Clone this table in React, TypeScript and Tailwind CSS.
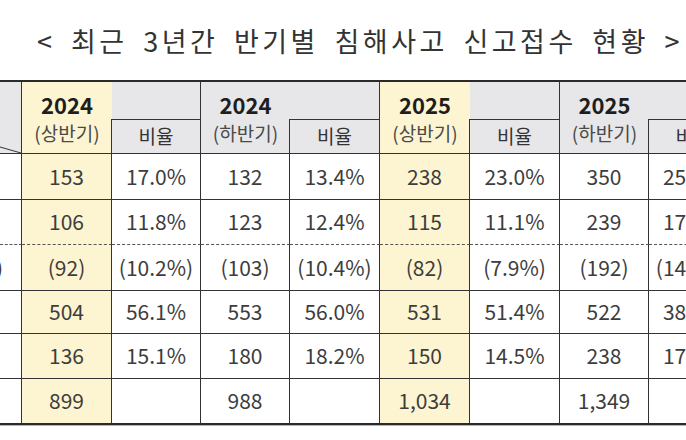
const groups = [
  { year: "2024", half: "(상반기)", yellow: true },
  { year: "2024", half: "(하반기)", yellow: false },
  { year: "2025", half: "(상반기)", yellow: true },
  { year: "2025", half: "(하반기)", yellow: false },
];

// one row per incident type; label column is cropped in the screenshot
const rows: { label: string; values: string[]; dashed?: boolean }[] = [
  { label: "DDoS 공격", values: ["153", "17.0%", "132", "13.4%", "238", "23.0%", "350", "25.9%"] },
  { label: "악성코드 감염", values: ["106", "11.8%", "123", "12.4%", "115", "11.1%", "239", "17.7%"], dashed: true },
  { label: "(랜섬웨어)", values: ["(92)", "(10.2%)", "(103)", "(10.4%)", "(82)", "(7.9%)", "(192)", "(14.2%)"] },
  { label: "서버 해킹", values: ["504", "56.1%", "553", "56.0%", "531", "51.4%", "522", "38.7%"] },
  { label: "기타", values: ["136", "15.1%", "180", "18.2%", "150", "14.5%", "238", "17.6%"] },
  { label: "합계", values: ["899", "", "988", "", "1,034", "", "1,349", ""] },
];

const App = () => {
  return (
    <div className="w-[686px] h-[440px] overflow-hidden bg-white font-['Noto_Sans_CJK_KR',sans-serif]">
      <div className="h-[80px] flex items-center justify-center pl-[34px]">
        <h1 className="text-[27px] leading-none tracking-[3.5px] [word-spacing:6px] text-[#333] whitespace-nowrap">
          &lt; 최근 3년간 반기별 침해사고 신고접수 현황 &gt;
        </h1>
      </div>

      <div className="w-[738px] border-t-2 border-b-2 border-[#2a2a2a]">
        <div className="grid grid-cols-[22px_90px_89px_89px_90px_90px_90px_89px_89px] grid-rows-[37px_35px_46px_45px_46px_43px_45px_44px]">
          {/* corner cell with diagonal split */}
          <div className="row-span-2 bg-[#e7e7e9] border-r border-b border-[#333] overflow-hidden">
            <svg className="block w-full h-full" viewBox="0 0 21 71" preserveAspectRatio="none">
              <line x1="0" y1="65" x2="21" y2="71" stroke="#333" strokeWidth="1" />
            </svg>
          </div>

          {groups.map((g, i) => (
            <>
              <div
                key={"y" + i}
                className={
                  "row-span-2 border-b border-[#333] flex flex-col items-center justify-center " +
                  (g.yellow ? "bg-[#fdf5d1]" : "bg-[#e7e7e9]")
                }
              >
                <span className="text-[22px] font-bold leading-[30px] text-[#1e1e1e]">{g.year}</span>
                <span className="text-[19px] leading-[28px] text-[#4a4a4a]">{g.half}</span>
              </div>
              <div key={"e" + i} className="bg-[#e7e7e9] border-r border-[#333]" />
            </>
          ))}

          {groups.map((_, i) => (
            <div
              key={"r" + i}
              className="-ml-px bg-[#e7e7e9] border border-[#333] flex items-center justify-center text-[19px] text-[#333]"
            >
              비율
            </div>
          ))}

          {rows.map((row, r) => {
            const last = r === rows.length - 1;
            const bottom = last
              ? ""
              : row.dashed
              ? "border-b [border-bottom-style:dashed] border-b-[#555]"
              : "border-b";
            return (
              <>
                <div
                  key={"l" + r}
                  className={"border-r border-[#333] bg-white overflow-hidden flex items-center justify-end pr-[18px] whitespace-nowrap text-[21px] text-[#3d3d3d] " + bottom}
                >
                  {r === 2 ? row.label : ""}
                </div>
                {row.values.map((v, c) => (
                  <div
                    key={r + "-" + c}
                    className={
                      "border-r border-[#333] flex items-center justify-center whitespace-nowrap text-[21px] text-[#3d3d3d] " +
                      (c % 4 === 0 ? "bg-[#fdf5d1] " : "bg-white ") +
                      bottom
                    }
                  >
                    {v}
                  </div>
                ))}
              </>
            );
          })}
        </div>
      </div>
      <div className="w-[686px] h-px bg-[#b5b5b5]" />
    </div>
  );
};

export default App;
